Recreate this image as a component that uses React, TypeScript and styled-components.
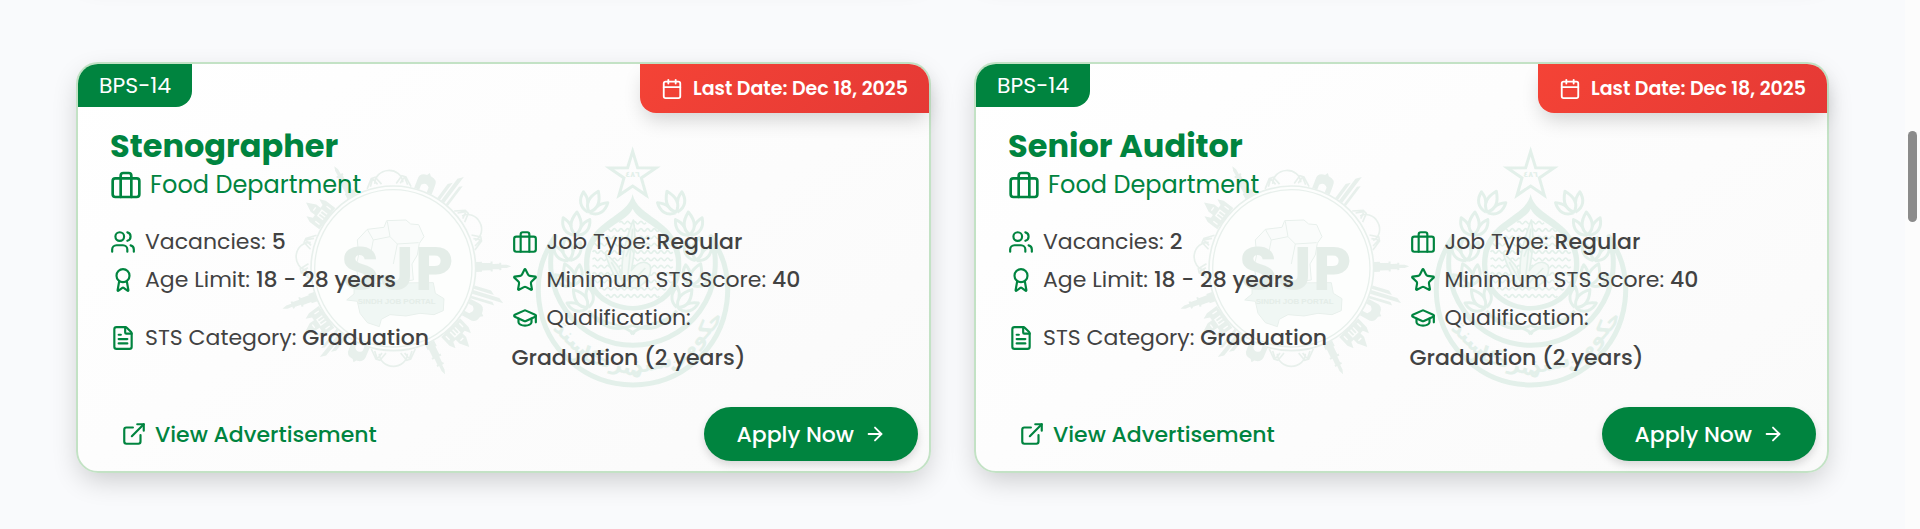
import React from "react";
import styled, { createGlobalStyle } from "styled-components";
import { ArrowRight, Award, Calendar, ExternalLink, FileText, GraduationCap, Star, Users } from "lucide-react";
import { FiBriefcase } from "react-icons/fi";

const GlobalStyle = createGlobalStyle`
  *, *::before, *::after { box-sizing: border-box; }
  body {
    margin: 0;
    background: #f9fafc;
    color: #424242;
    font-family: Poppins, Inter, "Liberation Sans", sans-serif;
  }
`;

const green = "#00843f";

const Page = styled.div`
  display: flex;
  min-height: 100vh;
  overflow: hidden;
`;

const Main = styled.main`
  flex: 1;
  padding: 0 76px 56px;
`;

const CardGrid = styled.div`
  display: grid;
  grid-template-columns: 1fr 1fr;
  gap: 43px;
`;

const cardShadow = "0 10px 28px -4px rgba(0, 0, 0, 0.2)";

const PreviousRow = styled(CardGrid)`
  height: 40px;
  margin: -67px 0 89px;
`;

const CardEdge = styled.div`
  border-radius: 22px;
  box-shadow: ${cardShadow};
`;

const Card = styled.article`
  position: relative;
  padding-top: 62px;
  border: 2px solid #c3e2c5;
  border-radius: 22px;
  background: linear-gradient(145deg, #ffffff, #fafafa);
  box-shadow: ${cardShadow};
`;

const GradeBadge = styled.div`
  position: absolute;
  top: 0;
  left: 0;
  padding: 0 21px;
  border-radius: 20px 0 16px 0;
  background: ${green};
  color: #fff;
  font-size: 22px;
  line-height: 43px;
`;

const DateBadge = styled.div`
  position: absolute;
  top: 0;
  right: 0;
  display: flex;
  align-items: center;
  gap: 10px;
  padding: 0 21px;
  border-radius: 0 20px 0 16px;
  background: linear-gradient(135deg, #f44336, #e53935);
  box-shadow: 0 10px 20px -4px rgba(0, 0, 0, 0.18);
  color: #fff;
  font-size: 19px;
  font-weight: 600;
  line-height: 49px;
`;

const Watermark = styled.svg`
  position: absolute;
  inset: 0;
  width: 460px;
  height: 252px;
  margin: auto;
`;

const Body = styled.div`
  position: relative;
  padding: 0 32px;
`;

const Title = styled.h2`
  margin: 0;
  color: ${green};
  font-size: 32px;
  font-weight: 700;
  line-height: 40px;
`;

const Department = styled.p`
  display: flex;
  align-items: center;
  gap: 8px;
  margin: 0 0 21px;
  color: ${green};
  font-size: 24px;
  line-height: 38px;
`;

const Details = styled.ul`
  display: grid;
  grid-template-columns: 1fr 1fr;
  align-items: center;
  gap: 5px 16px;
  margin: 0;
  padding: 0;
  list-style: none;
`;

const Detail = styled.li`
  display: flex;
  flex-wrap: wrap;
  align-items: center;
  row-gap: 7px;
  font-size: 22px;
  line-height: 33px;

  svg {
    margin-right: 9px;
    color: ${green};
  }
`;

const Label = styled.span`
  margin-right: 6px;
`;

const Value = styled.strong`
  font-weight: 500;
  white-space: nowrap;
`;

const Footer = styled.footer`
  position: relative;
  display: flex;
  align-items: center;
  justify-content: space-between;
  padding: 33px 11px 10px 43px;
`;

const AdvertLink = styled.a`
  display: flex;
  align-items: center;
  gap: 8px;
  color: ${green};
  font-size: 22px;
  font-weight: 500;
  text-decoration: none;
`;

const ApplyButton = styled.button`
  display: flex;
  align-items: center;
  gap: 10px;
  height: 54px;
  padding: 0 32px;
  border: 0;
  border-radius: 27px;
  background: ${green};
  box-shadow: 0 4px 8px rgba(0, 0, 0, 0.14);
  color: #fff;
  font-family: inherit;
  font-size: 22px;
  font-weight: 500;
  cursor: pointer;
`;

const ScrollTrack = styled.div`
  width: 15px;
  padding: 131px 3px 0;
  background: #fcfcfc;
`;

const ScrollThumb = styled.div`
  height: 91px;
  border-radius: 5px;
  background: #8b8b8b;
`;

const Bridge = () => (
  <g fill="none" strokeWidth="5">
    <path d="M-42 2A42 38 0 0 1 42 2" transform="translate(0 -6)" />
    <path d="M-66 10L-52 -20L-40 -24L-22 -2M66 10L52 -20L40 -24L22 -2M-56 4L-48 -20M56 4L48 -20M-34 -2L-46 -18M34 -2L46 -18" />
  </g>
);
const Dome = () => (
  <path stroke="none" d="M-28 4V-22Q-30 -44 -6 -46L0 -54L6 -46Q30 -44 28 -22V4H12V-12Q0 -26 -12 -12V4Z" />
);
const Bars = () => (
  <path stroke="none" d="M-22 4V-48L-12 -60V4ZM-8 4V-78L4 -94V4ZM10 4V-62L18 -70V4Z" />
);
const Minaret = () => (
  <path stroke="none" d="M-15 4V-14H-11V-40H-15V-46H-8V-66H-11V-72H-5V-88L0 -102L5 -88V-72H11V-66H8V-46H15V-40H11V-14H15V4Z" />
);
const Hall = () => (
  <g>
    <path stroke="none" d="M-40 4V-32L-32 -50L-24 -32H-14V-48L0 -76L14 -48V-32H24L32 -50L40 -32V4Z" />
    <path fill="none" stroke="#fcfdfc" strokeWidth="4" d="M-28 -4V-20M-10 -4V-24H10V-4M0 -4V-24M28 -4V-20M-6 -44H6" />
  </g>
);

const skyline: [React.FC, number][] = [
  [Bridge, -3], [Dome, 21], [Bars, 37], [Bridge, 62], [Minaret, 89], [Bars, 107],
  [Dome, 118], [Hall, 136], [Minaret, 154], [Bridge, 180], [Dome, 203], [Bars, 219],
  [Hall, 234], [Minaret, 250], [Bridge, 278], [Hall, 307], [Minaret, 330],
];

const Sprig = ({ x, y, turn }: { x: number; y: number; turn: number }) => (
  <g transform={`translate(${x} ${y}) rotate(${turn})`}>
    <path d="M0 26C-22 8 -20 -14 0 -42C20 -14 22 8 0 26Z" />
    <path d="M-3 28C-32 26 -44 4 -40 -22C-28 -16 -20 -8 -15 2M3 28C32 26 44 4 40 -22C28 -16 20 -8 15 2" />
  </g>
);

const Wreath = () => (
  <g strokeWidth="9">
    <Sprig x={218} y={192} turn={24} />
    <Sprig x={168} y={258} turn={4} />
    <Sprig x={144} y={334} turn={-8} />
    <Sprig x={150} y={410} turn={-22} />
    <Sprig x={186} y={482} turn={-38} />
    <path d="M206 512C242 562 290 578 338 556M226 530C262 556 300 548 344 582" />
  </g>
);

const waves = [248, 270, 292, 314, 336, 358, 380, 402, 424, 446, 468];

const Emblems = () => (
  <Watermark viewBox="0 0 460 252" aria-hidden="true">
    <g transform="translate(6 -2) scale(0.3333)" fill="#e8f0ec" stroke="#e8f0ec">
      {skyline.map(([Shape, angle]) => (
        <g key={angle} transform={`translate(340 385) rotate(${angle}) translate(0 -252)`}>
          <Shape />
        </g>
      ))}
      <circle cx="340" cy="385" r="247" fill="#fdfefd" strokeWidth="5" />
      <circle cx="340" cy="385" r="236" fill="none" strokeWidth="4" />
      <path
        fill="#fafcfb"
        strokeWidth="3"
        d="M232 300L262 268L312 262L320 242L378 240L392 252L416 254L432 290L418 310L412 345L396 372L400 420L240 440L228 380L236 345Z"
      />
      <path fill="none" strokeWidth="3" d="M262 268L280 300L330 290L352 312L416 308M330 290L322 244M352 312L340 372M280 300L270 350" />
      <path
        fill="#f0f7f4"
        strokeWidth="3"
        d="M222 430L460 428L466 460L492 476L490 512L462 524L420 520L378 528L330 524L304 538L298 560L262 548L240 520L232 484L200 480L222 462Z"
      />
      <g stroke="none" fill="#e4ede8" fontFamily="Poppins, Inter, sans-serif" textAnchor="middle">
        <text x="352" y="449" fontWeight="700" fontSize="184">SJP</text>
        <text x="350" y="491" fontFamily="Liberation Sans, sans-serif" fontWeight="700" fontSize="24">SINDH JOB PORTAL</text>
      </g>
    </g>
    <g transform="translate(246 -2) scale(0.3333)" fill="none" stroke="#e3f0ea" strokeWidth="8" strokeLinejoin="round">
      <path strokeWidth="9" strokeLinejoin="miter" d="M338 34L353 83L408 84L364 114L379 166L338 138L297 166L312 114L268 84L323 83Z" />
      <text x="338" y="110" textAnchor="middle" fill="#e3f0ea" stroke="none" fontFamily="DejaVu Sans, sans-serif" fontWeight="700" fontSize="24">٤٨٦</text>
      <path strokeWidth="15" d="M105 290A284 284 0 1 0 573 290A247 247 0 1 1 105 290Z" />
      <path
        fill="#e3f0ea"
        stroke="none"
        fillRule="evenodd"
        d="M338 162C352 238 484 238 484 372C484 460 420 510 338 512C256 510 192 460 192 372C192 238 324 238 338 162ZM338 206C318 252 208 266 208 372C208 450 266 496 338 498C410 496 468 450 468 372C468 266 358 252 338 206Z"
      />
      {waves.map((y) => {
        const half = Math.round(Math.sqrt(Math.max(0, 128 * 128 - (y - 368) * (y - 368))) / 20);
        return (
          <path key={y} strokeWidth="5" d={`M${338 - half * 20} ${y}${"q5 -8 10 0t10 0".repeat(half * 2)}`} />
        );
      })}
      <path
        fill="#f4f9f6"
        strokeWidth="5"
        d="M300 440C280 400 262 370 256 340C280 360 296 376 306 400C304 350 320 290 340 240C350 290 344 340 334 392C350 368 374 358 390 376C398 400 380 430 350 444Z"
      />
      <path strokeWidth="5" d="M310 430L274 366M322 424L338 266M334 428L376 384M316 440L298 392M318 350L338 300M342 340L322 300" />
      <Wreath />
      <g transform="translate(676 0) scale(-1 1)"><Wreath /></g>
      <g fill="#e3f0ea" stroke="none" fontFamily="DejaVu Sans, sans-serif" fontWeight="700" fontSize="62" textAnchor="middle">
        <text transform="translate(538 618) rotate(-48)">حکومت</text>
        <text transform="translate(400 690) rotate(-12)">سنڌ</text>
        <text transform="translate(256 682) rotate(18)">سرڪار</text>
        <text transform="translate(140 610) rotate(46)">سنڌ</text>
      </g>
    </g>
  </Watermark>
);

interface Job {
  title: string;
  department: string;
  vacancies: number;
}

const jobs: Job[] = [
  { title: "Stenographer", department: "Food Department", vacancies: 5 },
  { title: "Senior Auditor", department: "Food Department", vacancies: 2 },
];

const Field = ({ icon, label, value }: { icon: React.ReactNode; label: string; value: string }) => (
  <Detail>
    {icon}
    <Label>{label}:</Label>
    <Value>{value}</Value>
  </Detail>
);

const JobCard = ({ job }: { job: Job }) => (
  <Card>
    <Emblems />
    <GradeBadge>BPS-14</GradeBadge>
    <DateBadge>
      <Calendar size={22} />
      Last Date: Dec 18, 2025
    </DateBadge>
    <Body>
      <Title>{job.title}</Title>
      <Department>
        <FiBriefcase size={32} />
        {job.department}
      </Department>
      <Details>
        <Field icon={<Users size={26} />} label="Vacancies" value={String(job.vacancies)} />
        <Field icon={<FiBriefcase size={26} />} label="Job Type" value="Regular" />
        <Field icon={<Award size={26} />} label="Age Limit" value="18 - 28 years" />
        <Field icon={<Star size={26} />} label="Minimum STS Score" value="40" />
        <Field icon={<FileText size={26} />} label="STS Category" value="Graduation" />
        <Field icon={<GraduationCap size={26} />} label="Qualification" value="Graduation (2 years)" />
      </Details>
    </Body>
    <Footer>
      <AdvertLink href="#advertisement">
        <ExternalLink size={26} />
        View Advertisement
      </AdvertLink>
      <ApplyButton type="button">
        Apply Now
        <ArrowRight size={22} />
      </ApplyButton>
    </Footer>
  </Card>
);

export default function App() {
  return (
    <>
      <GlobalStyle />
      <Page>
        <Main>
          <PreviousRow aria-hidden="true">
            <CardEdge />
            <CardEdge />
          </PreviousRow>
          <CardGrid>
            {jobs.map((job) => (
              <JobCard key={job.title} job={job} />
            ))}
          </CardGrid>
        </Main>
        <ScrollTrack aria-hidden="true">
          <ScrollThumb />
        </ScrollTrack>
      </Page>
    </>
  );
}
